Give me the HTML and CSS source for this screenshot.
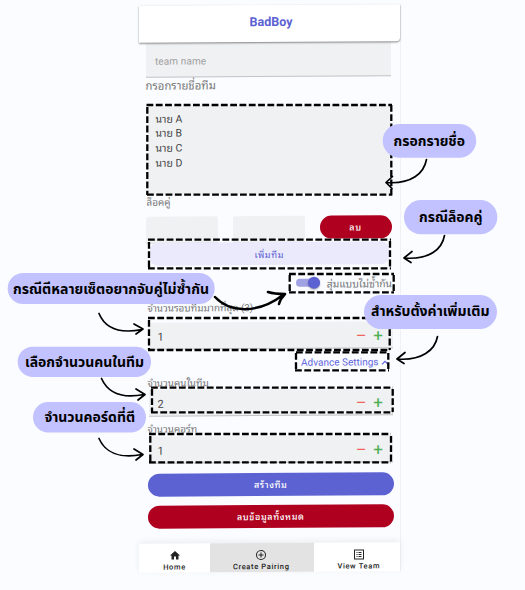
FILE: index.html
```html
<!DOCTYPE html>
<html lang="th">
<head>
<meta charset="utf-8">
<title>BadBoy</title>
<link rel="stylesheet" href="styles.css">
</head>
<body>
<main class="phone">
  <header class="top">BadBoy</header>
  <form class="form">
    <div class="field team">team name</div>
    <div class="label names-label"><span>กรอกรายชื่อทีม</span></div>
    <div class="names">นาย A<br>นาย B<br>นาย C<br>นาย D</div>
    <div class="label lock-label">ล็อคคู่</div>
    <div class="pair"><i class="slot"></i><i class="slot"></i><button type="button" class="btn danger">ลบ</button></div>
    <button type="button" class="btn add">เพิ่มทีม</button>
    <div class="switch-row"><span class="switch"></span><span class="switch-text">สุ่มแบบไม่ซ้ำกัน</span></div>
    <div class="label rounds-label">จำนวนรอบทีมมากที่สุด (3)</div>
    <div class="field number rounds">1<b class="minus">−</b><b class="plus">+</b></div>
    <div class="advance">Advance Settings <svg width="8" height="6" viewBox="0 0 8 6"><path d="M1 5l3-3 3 3"/></svg></div>
    <div class="label members-label">จำนวนคนในทีม</div>
    <div class="field number members">2<b class="minus">−</b><b class="plus">+</b></div>
    <div class="label courts-label">จำนวนคอร์ท</div>
    <div class="field number courts">1<b class="minus">−</b><b class="plus">+</b></div>
    <button type="button" class="btn wide primary">สร้างทีม</button>
    <button type="button" class="btn wide danger clear">ลบข้อมูลทั้งหมด</button>
  </form>
  <nav class="tabs">
    <a class="tab home"><svg viewBox="0 0 24 24"><path d="M10 20v-6h4v6h5v-8h3L12 3 2 12h3v8z"/></svg>Home</a>
    <a class="tab pairing"><svg viewBox="0 0 24 24"><path d="M13 7h-2v4H7v2h4v4h2v-4h4v-2h-4zM12 2a10 10 0 1 0 0 20 10 10 0 0 0 0-20zm0 18a8 8 0 1 1 0-16 8 8 0 0 1 0 16z"/></svg>Create Pairing</a>
    <a class="tab view"><svg viewBox="0 0 24 24"><path d="M11 7h6v2h-6zm0 4h6v2h-6zm0 4h6v2h-6zM7 7h2v2H7zm0 4h2v2H7zm0 4h2v2H7zM2 2v20h20V2zm18 18H4V4h16z"/></svg>View Team</a>
  </nav>
</main>
<svg class="notes" width="525" height="590" viewBox="0 0 525 590">
  <g class="frames">
    <path d="M146.500 105H392M391.300 105V195.500M147.300 107V195M147 194.700H392"/>
    <path d="M148 239.700H391M390 241V269M149 242V268M148 268.300H391"/>
    <path d="M289 274H394M393.700 275V292M289.700 275V292M289 292.300H394"/>
    <path d="M148 318H390M389.700 320V350M149 320V350M148 350H390"/>
    <path d="M296 352.300H389M388.300 353V370M296 353V370M295 370.300H389"/>
    <path d="M151 387.700H393M392.700 389V412M152 389V412M151 412.300H393"/>
    <path d="M149 434H391M391 436V462M150.300 436V462M149 462.300H391"/>
  </g>
  <g class="arrows">
    <path d="M426.500 159.500C424 173 412 184.500 386 182.500M392.500 176.500L386 182.500L392 188.500"/>
    <path d="M444.500 235.500C442 249 430 260 404 258M412 251.500L404 258L411 262.500"/>
    <path d="M437.500 336.500C435 350 422 361 397 359M405 352.500L397 359L404 363.500"/>
    <path d="M99 313.500C105 328 119 334 142 329.500M134 324L143 329L136 334"/>
    <path d="M101.500 378.500C108 393 121 399 144 394.500M136 389L145 394.500L138 400"/>
    <path d="M99 438.500C105 452 119 459 142 454.500M134 449L143 454.500L136 460"/>
    <path class="bold" d="M215 297C230 313 258 314 283 295M268 292C274 294 279 294 285 294C282 297 280 300 279 304"/>
  </g>
  <g class="pills">
    <rect x="382.700" y="124" width="93.500" height="33.700" rx="16.800"/>
    <rect x="404" y="200" width="93.300" height="34.300" rx="17"/>
    <rect x="364" y="295" width="133" height="34" rx="17"/>
    <rect x="7.700" y="273" width="207" height="31" rx="15.500"/>
    <rect x="17.700" y="346.700" width="133.300" height="30.300" rx="15.100"/>
    <rect x="33" y="402" width="113" height="30.500" rx="15.200"/>
  </g>
  <g class="captions">
    <text x="393.500" y="145.500" textLength="71.500" lengthAdjust="spacingAndGlyphs">กรอกรายชื่อ</text>
    <text x="419" y="221.500" textLength="63.500" lengthAdjust="spacingAndGlyphs">กรณีล็อคคู่</text>
    <text x="371" y="316" textLength="118.500" lengthAdjust="spacingAndGlyphs">สำหรับตั้งค่าเพิ่มเติม</text>
    <text x="13" y="293.500" textLength="196" lengthAdjust="spacingAndGlyphs">กรณีตีหลายเซ็ตอยากจับคู่ไม่ซ้ำกัน</text>
    <text x="25" y="367" textLength="119" lengthAdjust="spacingAndGlyphs">เลือกจำนวนคนในทีม</text>
    <text x="44.500" y="422" textLength="90.500" lengthAdjust="spacingAndGlyphs">จำนวนคอร์ดที่ตี</text>
  </g>
</svg>
</body>
</html>
```
FILE: styles.css
```css
* { box-sizing: border-box; }
body {
  margin: 0;
  width: 525px;
  height: 590px;
  overflow: hidden;
  background: #fafcff;
  font-family: Roboto, "Noto Sans Thai Looped", Loma, Waree, Garuda, "Noto Sans Thai", sans-serif;
  color: #444;
  position: relative;
}
.phone {
  width: 262px;
  height: 567px;
  margin: 5px 0 0 138.500px;
  display: flex;
  flex-direction: column;
  transform: skewY(-0.350deg);
  border-right: 1px solid #f0f1f4;
}
.top {
  height: 37px;
  flex: none;
  background: #fff;
  border-radius: 0 0 4px 0;
  box-shadow: 0 1px 2px #0007;
  color: #5c62d2;
  font-weight: 700;
  font-size: 12.500px;
  line-height: 34px;
  text-align: center;
  padding-left: 3px;
  position: relative;
}
.form { height: 501px; flex: none; padding: 0 7px 0 9.500px; display: flex; flex-direction: column; }
.field { flex: none; background: #f0f1f3; border-bottom: 1px solid #c4c4c7; }
.team { height: 35px; margin: 0 2px 0 -3px; padding-left: 9.500px; font-size: 10px; line-height: 37px; color: #a0a0a0; letter-spacing: .1px; }
.label { flex: none; height: 14px; line-height: 14px; font-size: 9.900px; color: #777; white-space: nowrap; margin-left: -1px; }
.names-label { font-size: 11.300px; margin: 2px 0 12px -3px; }
.names { flex: none; height: 89px; margin: 0 3px 0 -1px; padding: 6.500px 8px; background: #f0f1f3; font-size: 10.500px; line-height: 14.700px; }
.lock-label { margin: 1px 0 7px -2px; }
.pair { flex: none; display: flex; gap: 14.500px; height: 27px; margin-left: -3px; }
.slot { width: 72.500px; background: #f0f1f3; border-bottom: 1px solid #ccc; border-radius: 2px 2px 0 0; }
.btn { flex: none; border: 0; border-radius: 12px; padding: 0; font: 500 9px Roboto, "Noto Sans Thai Looped", Loma, Waree, Garuda, "Noto Sans Thai", sans-serif; color: #fff; height: 22.500px; letter-spacing: .6px; }
.danger { background: #b00020; }
.pair .btn { width: 72px; }
.add { height: 23px; margin: -1px 4px 0 1px; background: #ebeafc; color: #5c62d2; font-weight: 400; border-radius: 8px; }
.switch-row { flex: none; height: 18px; margin: 9px 1px 0 0; display: flex; justify-content: flex-end; align-items: center; gap: 7px; font-size: 10.300px; color: #777; white-space: nowrap; }
.switch { width: 24px; height: 8px; border-radius: 5px; background: #a1a2e4; display: flex; align-items: center; justify-content: flex-end; }
.switch::after { content: ""; width: 12px; height: 12px; border-radius: 50%; background: #5c62d2; box-shadow: 0 1px 2px #0005; flex: none; }
.rounds-label { margin-top: 9px; }
.number { height: 27px; display: flex; align-items: center; padding: 2px 10px 0 9px; font-size: 11px; }
.number b { font-weight: 400; font-size: 17px; line-height: 18px; width: 10px; text-align: center; }
.minus { margin-left: auto; margin-right: 7.500px; color: #f3655c; transform: scaleX(1.150); }
.plus { color: #4db052; }
.rounds { margin-top: 7px; }
.advance { flex: none; height: 16px; margin: 5px 4px 0 0; text-align: right; color: #6267dc; font-size: 10px; line-height: 17px; white-space: nowrap; }
.advance svg { fill: none; stroke: currentColor; stroke-width: 1.200; }
.members-label { margin-top: 6px; }
.members { margin-top: -1px; }
.courts-label { margin-top: 6px; }
.courts { margin-top: 0; }
.wide { margin-left: -.5px; margin-right: -.5px; }
.primary { background: #5c62d2; margin-top: 10px; }
.clear { margin-top: 9.500px; }
.tabs { display: flex; flex: none; height: 29px; background: #fff; box-shadow: 0 -2px 7px #0001; }
.tab { display: flex; flex-direction: column; align-items: center; font-size: 7.500px; line-height: 9px; letter-spacing: .65px; color: #222; padding-top: 6px; font-weight: 500; }
.tab svg { width: 12px; height: 12px; fill: #222; margin-bottom: 1px; }
.home { width: 71px; }
.pairing { width: 103.500px; background: #e3e3e3; padding-right: 1px; }
.view { flex: 1; padding-left: 4px; }
.notes { position: absolute; left: 0; top: 0; }
.frames path { fill: none; stroke: #000; stroke-width: 2.300; stroke-dasharray: 6.800 2.500; }
.arrows path { fill: none; stroke: #000; stroke-width: 1.700; stroke-linecap: round; stroke-linejoin: round; }
.arrows .bold { stroke-width: 2.500; }
.pills rect { fill: #c1c2ff; }
.captions text { font: 700 14.500px "Noto Sans Thai", "Noto Sans", sans-serif; fill: #000; }
```
